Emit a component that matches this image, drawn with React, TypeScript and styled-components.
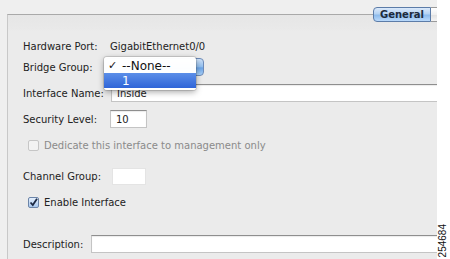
import React from 'react'
import styled, { createGlobalStyle } from 'styled-components'

const Global = createGlobalStyle`
  html, body {
    margin: 0;
    padding: 0;
    background: #ffffff;
  }
  body {
    font-family: "DejaVu Sans", "Liberation Sans", sans-serif;
    font-size: 10px;
    color: #222;
  }
`

const Screen = styled.div`
  display: flex;
  width: 450px;
  height: 259px;
  overflow: hidden;
`

const Window = styled.div`
  width: 437px;
  height: 259px;
  background: #efefef;
  padding: 14px 0 0 7px;
  box-sizing: border-box;
  overflow: hidden;
`

const Panel = styled.div`
  position: relative;
  width: 460px;
  height: 260px;
  border-top: 1px solid #a9a9a9;
  border-left: 1px solid #c8c8c8;
  background: linear-gradient(#e6e6e6 0px, #e9e9e9 14px, #ebebeb 16px, #ebebeb 100%);
  box-sizing: border-box;
`

const TabBar = styled.div`
  position: absolute;
  top: -8px;
  left: 365px;
  display: flex;
`

const Tab = styled.div<{ $active?: boolean }>`
  height: 15px;
  box-sizing: border-box;
  padding: 0 ${p => (p.$active ? 6 : 0)}px;
  width: ${p => (p.$active ? 'auto' : '20px')};
  display: flex;
  align-items: center;
  font-weight: bold;
  font-size: 10px;
  color: #1c2a3c;
  border: 1px solid ${p => (p.$active ? '#5c7ca8' : '#9a9a9a')};
  border-radius: ${p => (p.$active ? '4px 0 0 4px' : '0')};
  border-left-width: ${p => (p.$active ? '1px' : '0')};
  background: ${p =>
    p.$active
      ? 'linear-gradient(#dbe9fa 0%, #b4d2f3 45%, #8dbbec 55%, #b9d9fb 100%)'
      : 'linear-gradient(#ffffff 0%, #f0f0f0 50%, #e2e2e2 55%, #f4f4f4 100%)'};
`

const Form = styled.div`
  display: flex;
  flex-direction: column;
  padding: 22px 0 0 15px;
`

const Row = styled.div<{ $top: number }>`
  display: flex;
  align-items: center;
  height: 18px;
  margin-top: ${p => p.$top}px;
`

const Label = styled.span<{ $width?: number }>`
  display: inline-block;
  width: ${p => (p.$width ? `${p.$width}px` : 'auto')};
  margin-right: ${p => (p.$width ? 0 : 8)}px;
  white-space: nowrap;
`

const Value = styled.span`
  white-space: nowrap;
`

const TextField = styled.div<{ $width: number }>`
  width: ${p => p.$width}px;
  height: 18px;
  box-sizing: border-box;
  background: #fff;
  border: 1px solid #c4c4c4;
  border-top-color: #8e8e8e;
  box-shadow: inset 0 1px 1px rgba(0, 0, 0, 0.08);
  padding: 0 5px;
  display: flex;
  align-items: center;
  white-space: nowrap;
`

const PlainField = styled.div<{ $width: number }>`
  width: ${p => p.$width}px;
  height: 17px;
  background: #fff;
  border: 1px solid #e4e4e4;
  box-sizing: border-box;
`

const SelectWrap = styled.div`
  position: relative;
  margin-left: -6px;
  width: 100px;
  height: 18px;
`

const SelectButton = styled.div`
  position: absolute;
  inset: 0;
  border-radius: 4px;
  border: 1px solid #6d8bb8;
  background: linear-gradient(#cfe2f8 0%, #8fbdee 50%, #6aa3e6 55%, #a8d0f8 100%);
`

const Menu = styled.div`
  position: absolute;
  top: -1px;
  left: 0;
  width: 92px;
  padding: 1px 0 2px;
  background: rgba(255, 255, 255, 0.98);
  border-radius: 3px;
  box-shadow: 0 2px 6px rgba(0, 0, 0, 0.35), 0 0 0 1px rgba(0, 0, 0, 0.12);
  z-index: 2;
`

const MenuItem = styled.div<{ $selected?: boolean }>`
  display: flex;
  align-items: center;
  height: 15px;
  padding-left: 4px;
  font-size: 12px;
  color: ${p => (p.$selected ? '#fff' : '#111')};
  background: ${p => (p.$selected ? 'linear-gradient(#5b8ee8, #2f65d8)' : 'transparent')};
`

const Check = styled.span`
  display: inline-block;
  width: 14px;
  font-size: 11px;
`

const CheckRow = styled.label<{ $disabled?: boolean }>`
  display: flex;
  align-items: center;
  gap: 5px;
  padding-left: 5px;
  color: ${p => (p.$disabled ? '#8a8a8a' : '#222')};
`

const Box = styled.span<{ $checked?: boolean; $disabled?: boolean }>`
  width: 11px;
  height: 11px;
  box-sizing: border-box;
  border-radius: 2px;
  border: 1px solid ${p => (p.$disabled ? '#c6c6c6' : '#6b84a8')};
  background: ${p =>
    p.$checked
      ? 'linear-gradient(#e4effc, #a9c8ee)'
      : p.$disabled
      ? '#f3f3f3'
      : '#fff'};
  display: flex;
  align-items: center;
  justify-content: center;
`

const Side = styled.div`
  flex: 1;
  position: relative;
  background: #fff;
`

const FigureId = styled.span`
  position: absolute;
  left: 0px;
  bottom: 2px;
  font-family: "Liberation Sans", Arial, sans-serif;
  font-size: 10px;
  color: #111;
  writing-mode: vertical-rl;
  transform: rotate(180deg);
`

const App = () => {
  return (
    <Screen>
      <Global />
      <Window>
        <Panel>
          <TabBar>
            <Tab $active>General</Tab>
            <Tab />
          </TabBar>
          <Form>
            <Row $top={0}>
              <Label $width={87}>Hardware Port:</Label>
              <Value>GigabitEthernet0/0</Value>
            </Row>
            <Row $top={3}>
              <Label $width={87}>Bridge Group:</Label>
              <SelectWrap>
                <SelectButton />
                <Menu>
                  <MenuItem>
                    <Check>✓</Check>--None--
                  </MenuItem>
                  <MenuItem $selected>
                    <Check />1
                  </MenuItem>
                </Menu>
              </SelectWrap>
            </Row>
            <Row $top={8}>
              <Label $width={88}>Interface Name:</Label>
              <TextField $width={340}>Inside</TextField>
            </Row>
            <Row $top={8}>
              <Label $width={87}>Security Level:</Label>
              <TextField $width={37}>10</TextField>
            </Row>
            <Row $top={8}>
              <CheckRow $disabled>
                <Box $disabled />
                Dedicate this interface to management only
              </CheckRow>
            </Row>
            <Row $top={13}>
              <Label $width={89}>Channel Group:</Label>
              <PlainField $width={34} />
            </Row>
            <Row $top={8}>
              <CheckRow>
                <Box $checked>
                  <svg width="9" height="9" viewBox="0 0 9 9">
                    <path d="M1.5 4.5 L3.8 7 L8 0.8" fill="none" stroke="#1d2a44" strokeWidth="1.8" />
                  </svg>
                </Box>
                Enable Interface
              </CheckRow>
            </Row>
            <Row $top={24}>
              <Label>Description:</Label>
              <TextField $width={360} />
            </Row>
          </Form>
        </Panel>
      </Window>
      <Side>
        <FigureId>254684</FigureId>
      </Side>
    </Screen>
  )
}

export default App
